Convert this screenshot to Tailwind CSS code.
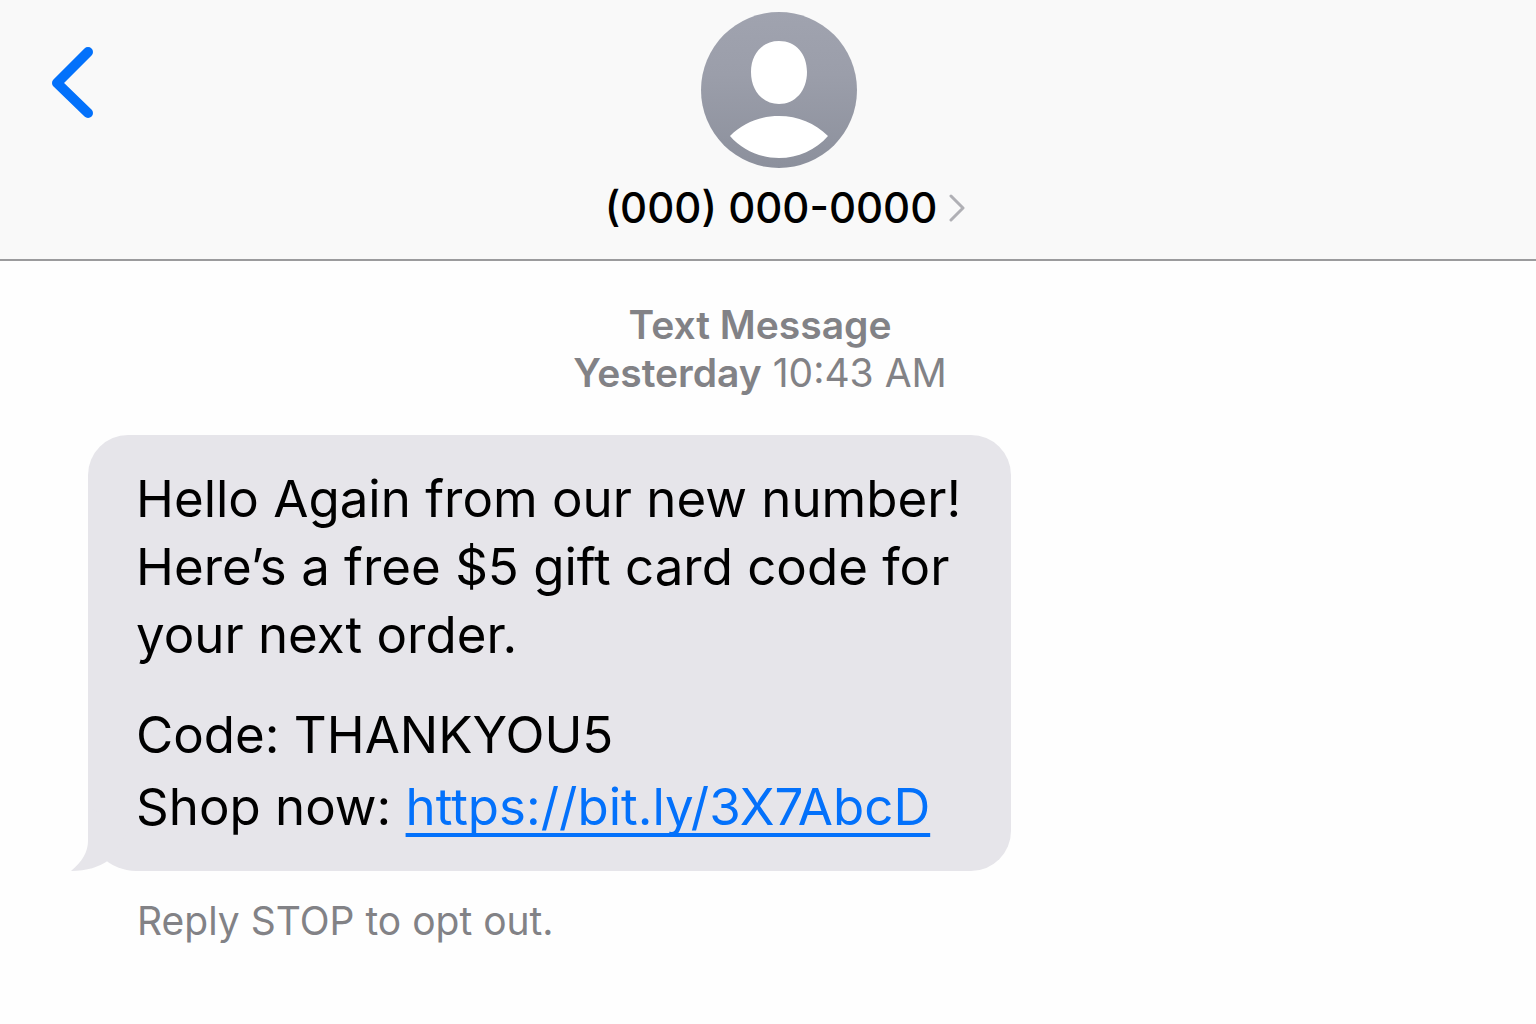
<!DOCTYPE html>
<html lang="en">
<head>
<meta charset="utf-8">
<meta name="viewport" content="width=device-width, initial-scale=1">
<title>Messages</title>
<script src="https://cdn.jsdelivr.net/npm/@tailwindcss/browser@4"></script>
</head>
<body class="min-h-screen bg-[#fefefe] font-['Inter',sans-serif] text-black">
<header class="grid grid-cols-[1fr_auto_1fr] items-start border-b-2 border-[#9b9b9d] bg-[#f9f9f9] pt-3 pb-[23px]">
  <button type="button" aria-label="Back" class="mt-8 ml-12 w-12">
    <svg class="h-20 w-12" viewBox="0 0 48 80" fill="none" stroke="#0371fb" stroke-width="10" stroke-linecap="round" stroke-linejoin="round"><path d="M40 8 9 39 40 69"/></svg>
  </button>
  <div class="flex flex-col items-center pl-[22px]">
    <svg class="size-[156px]" viewBox="0 0 156 156" role="img" aria-label="Contact photo">
      <defs><linearGradient id="avatar-fill" x1="0" y1="0" x2="0" y2="1"><stop offset="0" stop-color="#a0a3af"/><stop offset="0.4" stop-color="#9b9eaa"/><stop offset="1" stop-color="#8c909c"/></linearGradient></defs>
      <circle cx="78" cy="78" r="78" fill="url(#avatar-fill)"/>
      <path fill="#fff" d="M78 29c17 0 28 13 28 31 0 19-12 32-28 32S50 79 50 60c0-18 11-31 28-31ZM29 124c13-13 30-20 49-20s36 7 49 20c-12 14-30 22-49 22s-37-8-49-22Z"/>
    </svg>
    <button type="button" class="mt-3 flex items-center gap-3 pl-3 text-[42px] leading-14 font-medium">
      <span>(000) 000-0000</span>
      <svg class="h-7 w-4" viewBox="0 0 16 28" fill="none" stroke="#b0b0b5" stroke-width="3" stroke-linecap="round" stroke-linejoin="round"><path d="m2 2 12 12L2 26"/></svg>
    </button>
  </div>
</header>
<main class="pt-10">
  <p class="pr-4 text-center text-[39px] leading-12 text-[#828286]"><span class="font-semibold">Text Message</span><br><span class="font-semibold">Yesterday</span> 10:43 AM</p>
  <section class="relative mt-[38px] ml-[88px] w-fit rounded-[40px] rounded-bl-[48px] bg-[#e6e5ea] pr-[50px] pl-12 pt-[30px] pb-7 text-[51px]">
    <svg class="absolute bottom-0 -left-[17px] size-16" viewBox="0 0 64 64" fill="#e6e5ea" aria-hidden="true"><path d="M17 0v34c0 11-6 21-17 30 16 0 28-4 38-11L60 20Z"/></svg>
    <p class="relative leading-17">Hello Again from our new number!<br>Here’s a free $5 gift card code for<br>your next order.</p>
    <p class="relative mt-[30px] leading-18">Code: THANKYOU5<br>Shop now: <a href="https://bit.ly/3X7AbcD" class="text-[#0371fb] underline decoration-4 underline-offset-8 [text-decoration-skip-ink:none]">https://bit.ly/3X7AbcD</a></p>
  </section>
  <p class="mt-6 ml-[137px] text-[39px] leading-13 text-[#828286]">Reply STOP to opt out.</p>
</main>
</body>
</html>
